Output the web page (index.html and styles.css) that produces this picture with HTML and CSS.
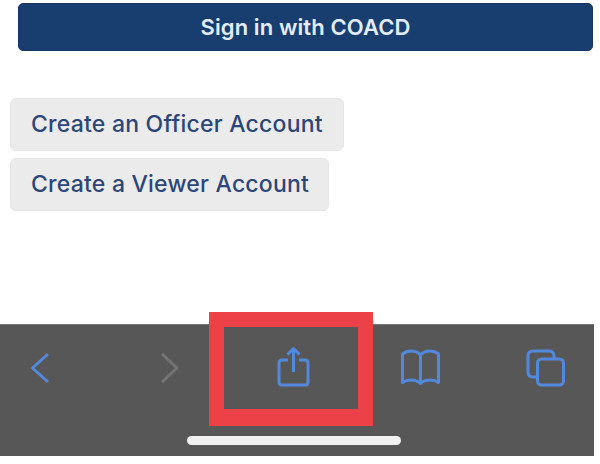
FILE: index.html
```html
<!DOCTYPE html>
<html lang="en">
<head>
<meta charset="utf-8">
<title>Sign in</title>
<link rel="stylesheet" href="styles.css">
</head>
<body>
<main class="content">
  <button class="signin">Sign in with COACD</button>
  <div class="accounts">
    <button class="account officer">Create an Officer Account</button>
    <button class="account viewer">Create a Viewer Account</button>
  </div>
</main>
<footer class="browser-bar">
  <nav class="tools">
    <svg class="icon" viewBox="0 0 40 44"><path d="M28 9 12.5 23 28 37"/></svg>
    <svg class="icon disabled" viewBox="0 0 40 44"><path d="M15 9 30 23 15 37"/></svg>
    <div class="share">
      <svg class="icon" viewBox="0 0 40 44"><path d="M15 15H9Q6 15 6 18V37Q6 40 9 40H32Q35 40 35 37V18Q35 15 32 15H26M20.5 27V4M14.5 9.5 20.5 3.5 26.5 9.5"/></svg>
      <span class="highlight"></span>
    </div>
    <svg class="icon" viewBox="0 0 40 44"><path d="M20.5 10V38M20.5 10Q17 6 11 6Q6 6 2.5 9V37.5Q6 35 11 35Q17 35 20.5 38.5Q24 35 30 35Q35 35 38.5 37.5V9Q35 6 30 6Q24 6 20.5 10Z"/></svg>
    <svg class="icon" viewBox="0 0 40 44"><path d="M11 32H7Q2 32 2 27V11Q2 6 7 6H23Q28 6 28 11V13"/><rect x="11.5" y="14" width="26" height="26" rx="4"/></svg>
  </nav>
  <div class="home"></div>
</footer>
</body>
</html>
```
FILE: styles.css
```css
* { box-sizing: border-box; }
body { margin: 0; width: 600px; height: 464px; overflow: hidden; background: #fff; font-family: Inter, "Liberation Sans", sans-serif; }
button { display: block; margin: 0; padding: 0; border: 0; font: inherit; white-space: nowrap; }
.content { height: 324px; padding: 3px 7px 0 10px; }
.signin { width: 575px; height: 48px; margin-left: 8px; border: 1px solid #163565; border-radius: 5px; background: #173e6e; color: #e3edff; font-size: 22px; font-weight: 600; letter-spacing: 0.1px; }
.accounts { display: flex; flex-direction: column; gap: 7px; margin-top: 47px; }
.account { height: 53px; padding: 0 0 2px 20px; border: 1px solid #e5e5e5; border-radius: 6px; background: #ebebeb; color: #2c4678; font-size: 23px; font-weight: 500; letter-spacing: 0.22px; text-align: left; }
.officer { width: 334px; }
.viewer { width: 319px; }
.browser-bar { width: 594px; height: 132px; padding-top: 20px; background: #575757; border-top: 1px solid #777; }
.tools { display: flex; justify-content: space-between; width: 546px; margin-left: 20px; }
.icon { display: block; width: 40px; height: 44px; fill: none; stroke: #5289dc; stroke-width: 3; stroke-linejoin: round; }
.disabled { stroke: #747474; }
.share { position: relative; }
.highlight { position: absolute; left: -64px; top: -33px; width: 164px; height: 114px; border: 15px solid #ed4148; border-bottom-width: 17px; }
.home { width: 214px; height: 9px; margin: 47px 0 0 187px; border-radius: 5px; background: #f1f1f1; }
```
